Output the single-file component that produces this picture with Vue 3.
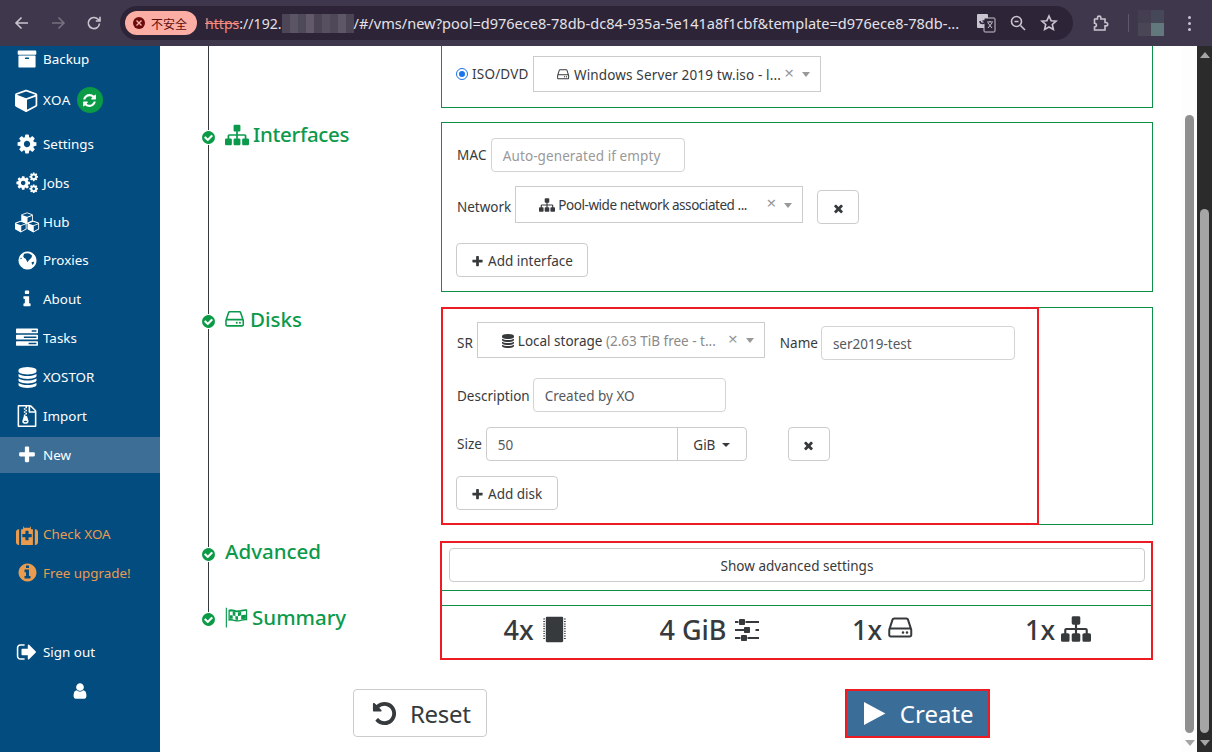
<script setup>
import { h } from 'vue'

const cog = 'M1152 896q0-106-75-181t-181-75-181 75-75 181 75 181 181 75 181-75 75-181zm512-109v222q0 12-8 23t-20 13l-185 28q-19 54-39 91 35 50 107 138 10 12 10 25t-9 23q-27 37-99 108t-94 71q-12 0-26-9l-138-108q-44 23-91 38-16 136-29 186-7 28-36 28h-222q-14 0-24.500-8.500t-11.500-21.500l-28-184q-49-16-90-37l-141 107q-10 9-25 9-14 0-25-11-126-114-165-168-7-10-7-23 0-12 8-23 15-21 51-66.500t54-70.500q-27-50-41-99l-183-27q-13-2-21-12.500t-8-23.500v-222q0-12 8-23t19-13l186-28q14-46 39-92-40-57-107-138-10-12-10-24 0-10 9-23 26-36 98.500-107.500t94.500-71.500q13 0 26 10l138 107q44-23 91-38 16-136 29-186 7-28 36-28h222q14 0 24.500 8.500t11.500 21.500l28 184q49 16 90 37l142-107q9-9 24-9 13 0 25 10 129 119 165 170 7 8 7 22 0 12-8 23-15 21-51 66.500t-54 70.500q26 50 41 98l183 28q13 2 21 12.500t8 23.500z'
const cube = 'M896 1629l640-349v-636l-640 233v752zm-64-864l698-254-698-254-698 254zm832-252v768q0 35-18 65t-49 47l-704 384q-28 16-61 16t-61-16l-704-384q-31-17-49-47t-18-65v-768q0-40 23-73t61-47l704-256q22-8 44-8t44 8l704 256q38 14 61 47t23 73z'
const disk = 'M896 128q209 0 385.500 103t279.500 279.500 103 385.500-103 385.500-279.500 279.500-385.500 103-385.500-103-279.500-279.500-103-385.500 103-385.500 279.500-279.500 385.500-103z'

const icons = {
  cog: [{ d: cog }],
  cogs: [
    { d: cog, transform: 'translate(20 300) scale(.66)' },
    { d: cog, transform: 'translate(1020 60) scale(.42)' },
    { d: cog, transform: 'translate(1020 950) scale(.42)' },
  ],
  cube: [{ d: cube }],
  cubes: [
    { d: cube, transform: 'translate(448 180) scale(.5)' },
    { d: cube, transform: 'translate(0 780) scale(.5)' },
    { d: cube, transform: 'translate(896 780) scale(.5)' },
  ],
  archive: [{ d: 'M1088 832q0-26-19-45t-45-19h-256q-26 0-45 19t-19 45 19 45 45 19h256q26 0 45-19t19-45zm576-192v960q0 26-19 45t-45 19h-1408q-26 0-45-19t-19-45v-960q0-26 19-45t45-19h1408q26 0 45 19t19 45zm64-448v256q0 26-19 45t-45 19h-1536q-26 0-45-19t-19-45v-256q0-26 19-45t45-19h1536q26 0 45 19t19 45z' }],
  globe: [
    { d: disk },
    { d: 'M620 330q180-70 420-30 150 60 250 190-40 200-190 300-120 100-190 250-110-130-170-290-140-60-210-200 30-130 90-220z', fill: '#034c7f' },
    { d: 'M1240 1050q110-60 230-40-30 160-130 270-90-80-100-230z', fill: '#034c7f' },
    { d: 'M330 640q60 40 90 110-60 40-130 40 10-80 40-150z', fill: '#034c7f' },
  ],
  info: [{ d: 'M1216 1344v128q0 26-19 45t-45 19h-512q-26 0-45-19t-19-45v-128q0-26 19-45t45-19h64v-384h-64q-26 0-45-19t-19-45v-128q0-26 19-45t45-19h384q26 0 45 19t19 45v576h64q26 0 45 19t19 45zm-128-1152v192q0 26-19 45t-45 19h-256q-26 0-45-19t-19-45v-192q0-26 19-45t45-19h256q26 0 45 19t19 45z' }],
  tasks: [{ d: 'M1024 1408h640v-128h-640v128zm-384-512h1024v-128h-1024v128zm640-512h384v-128h-384v128zm512 832v256q0 26-19 45t-45 19h-1664q-26 0-45-19t-19-45v-256q0-26 19-45t45-19h1664q26 0 45 19t19 45zm0-512v256q0 26-19 45t-45 19h-1664q-26 0-45-19t-19-45v-256q0-26 19-45t45-19h1664q26 0 45 19t19 45zm0-512v256q0 26-19 45t-45 19h-1664q-26 0-45-19t-19-45v-256q0-26 19-45t45-19h1664q26 0 45 19t19 45z' }],
  database: [{ d: 'M896 768q237 0 443-43t325-127v170q0 69-103 128t-280 93.500-385 34.500-385-34.500-280-93.500-103-128v-170q119 84 325 127t443 43zm0 768q237 0 443-43t325-127v170q0 69-103 128t-280 93.500-385 34.500-385-34.500-280-93.500-103-128v-170q119 84 325 127t443 43zm0-384q237 0 443-43t325-127v170q0 69-103 128t-280 93.500-385 34.500-385-34.500-280-93.500-103-128v-170q119 84 325 127t443 43zm0-1152q208 0 385 34.500t280 93.500 103 128v128q0 69-103 128t-280 93.500-385 34.500-385-34.500-280-93.500-103-128v-128q0-69 103-128t280-93.500 385-34.500z' }],
  zip: [{ d: 'M768 384v-128h-128v128h128zm128 128v-128h-128v128h128zm-128 128v-128h-128v128h128zm128 128v-128h-128v128h128zm700-388q28 28 48 76t20 88v1152q0 40-28 68t-68 28h-1344q-40 0-68-28t-28-68v-1600q0-40 28-68t68-28h896q40 0 88 20t76 48zm-444-244v376h376q-10-29-22-41l-313-313q-12-12-41-22zm384 1528v-1024h-416q-40 0-68-28t-28-68v-416h-128v128h-128v-128h-512v1536h1280zm-627-721l107 349q8 27 8 52 0 83-72.500 137.500t-183.500 54.500-183.500-54.500-72.500-137.500q0-25 8-52 21-63 120-396v-128h128v128h79q22 0 39 13t23 34zm-141 465q53 0 90.500-19t37.500-45-37.500-45-90.500-19-90.500 19-37.500 45 37.500 45 90.500 19z' }],
  plus: [{ d: 'M1600 736v192q0 40-28 68t-68 28h-416v416q0 40-28 68t-68 28h-192q-40 0-68-28t-28-68v-416h-416q-40 0-68-28t-28-68v-192q0-40 28-68t68-28h416v-416q0-40 28-68t68-28h192q40 0 68 28t28 68v416h416q40 0 68 28t28 68z' }],
  medkit: [{ d: 'M1280 1120v-192q0-14-9-23t-23-9h-224v-224q0-14-9-23t-23-9h-192q-14 0-23 9t-9 23v224h-224q-14 0-23 9t-9 23v192q0 14 9 23t23 9h224v224q0 14 9 23t23 9h192q14 0 23-9t9-23v-224h224q14 0 23-9t9-23zm-640-736h512v-128h-512v128zm-384 128v1280h-32q-92 0-158-66t-66-158v-832q0-92 66-158t158-66h32zm1120 0v1280h-960v-1280h160v-160q0-40 28-68t68-28h448q40 0 68 28t28 68v160h160zm416 224v832q0 92-66 158t-158 66h-32v-1280h32q92 0 158 66t66 158z' }],
  infoCircle: [{ d: 'M1152 1376v-160q0-14-9-23t-23-9h-96v-512q0-14-9-23t-23-9h-320q-14 0-23 9t-9 23v160q0 14 9 23t23 9h96v320h-96q-14 0-23 9t-9 23v160q0 14 9 23t23 9h448q14 0 23-9t9-23zm-128-896v-160q0-14-9-23t-23-9h-192q-14 0-23 9t-9 23v160q0 14 9 23t23 9h192q14 0 23-9t9-23zm640 416q0 209-103 385.500t-279.500 279.500-385.500 103-385.500-103-279.500-279.500-103-385.500 103-385.500 279.500-279.500 385.500-103 385.500 103 279.500 279.500 103 385.500z' }],
  signOut: [{ d: 'M704 1440q0 4 1 20t.5 26.500-3 23.500-10 19.500-20.500 6.500h-320q-119 0-203.500-84.500t-84.500-203.500v-704q0-119 84.500-203.500t203.500-84.500h320q13 0 22.500 9.500t9.500 22.500q0 4 1 20t.5 26.500-3 23.500-10 19.500-20.500 6.500h-320q-66 0-113 47t-47 113v704q0 66 47 113t113 47h312l11.500 1 11.500 3 8 5.500 7 9 2 13.500zm928-544q0 26-19 45l-544 544q-19 19-45 19t-45-19-19-45v-288h-448q-26 0-45-19t-19-45v-384q0-26 19-45t45-19h448v-288q0-26 19-45t45-19 45 19l544 544q19 19 19 45z' }],
  user: [{ d: 'M1536 1399q0 109-62.500 187t-150.500 78h-854q-88 0-150.500-78t-62.500-187q0-85 8.500-160.500t31.500-152 58.500-131 94-89 134.500-34.500q131 128 313 128t313-128q76 0 134.500 34.500t94 89 58.500 131 31.500 152 8.500 160.500zm-256-887q0 159-112.500 271.500t-271.500 112.500-271.500-112.500-112.500-271.500 112.500-271.500 271.500-112.500 271.500 112.500 112.500 271.500z' }],
  refresh: [{ d: 'M1639 1056q0 5-1 7-64 268-268 434.500t-478 166.500q-146 0-282.500-55t-243.500-157l-129 129q-19 19-45 19t-45-19-19-45v-448q0-26 19-45t45-19h448q26 0 45 19t19 45-19 45l-137 137q71 66 161 102t187 36q134 0 250-65t186-179q11-17 53-117 8-23 30-23h192q13 0 22.500 9.500t9.500 22.500zm25-800v448q0 26-19 45t-45 19h-448q-26 0-45-19t-19-45 19-45l138-138q-148-137-349-137-134 0-250 65t-186 179q-11 17-53 117-8 23-30 23h-199q-13 0-22.500-9.500t-9.500-22.500v-7q65-268 270-434.500t480-166.500q146 0 284 55.500t245 156.500l130-129q19-19 45-19t45 19 19 45z' }],
  sitemap: [{ d: 'M1792 1248v320q0 40-28 68t-68 28h-320q-40 0-68-28t-28-68v-320q0-40 28-68t68-28h96v-192h-512v192h96q40 0 68 28t28 68v320q0 40-28 68t-68 28h-320q-40 0-68-28t-28-68v-320q0-40 28-68t68-28h96v-192h-512v192h96q40 0 68 28t28 68v320q0 40-28 68t-68 28h-320q-40 0-68-28t-28-68v-320q0-40 28-68t68-28h96v-192q0-52 38-90t90-38h512v-192h-96q-40 0-68-28t-28-68v-320q0-40 28-68t68-28h320q40 0 68 28t28 68v320q0 40-28 68t-68 28h-96v192h512q52 0 90 38t38 90v192h96q40 0 68 28t28 68z' }],
  hdd: [{ d: 'M1040 1120q0 33-23.500 56.500t-56.500 23.500-56.500-23.500-23.500-56.500 23.500-56.500 56.500-23.500 56.500 23.500 23.500 56.500zm256 0q0 33-23.500 56.500t-56.500 23.500-56.500-23.500-23.500-56.500 23.500-56.500 56.500-23.500 56.500 23.500 23.500 56.500zm128 160v-320q0-13-9.500-22.500t-22.500-9.500h-1216q-13 0-22.500 9.500t-9.500 22.500v320q0 13 9.500 22.500t22.500 9.500h1216q13 0 22.500-9.500t9.500-22.500zm-1230-480h1180l-157-482q-4-13-16-21.500t-26-8.500h-782q-14 0-26 8.500t-16 21.500zm1358 160v320q0 66-47 113t-113 47h-1216q-66 0-113-47t-47-113v-320q0-25 16-75l197-606q17-53 63-86t101-33h782q55 0 101 33t63 86l197 606q16 50 16 75z' }],
  check: [{ d: 'M1412 734q0-28-18-46l-91-90q-19-19-45-19t-45 19l-408 407-226-226q-19-19-45-19t-45 19l-91 90q-18 18-18 46 0 27 18 45l362 362q19 19 45 19 27 0 46-19l543-543q18-18 18-45zm252 162q0 209-103 385.500t-279.500 279.500-385.500 103-385.500-103-279.500-279.500-103-385.500 103-385.500 279.500-279.500 385.500-103 385.500 103 279.500 279.500 103 385.500z' }],
  times: [{ d: 'M1490 1322q0 40-28 68l-136 136q-28 28-68 28t-68-28l-294-294-294 294q-28 28-68 28t-68-28l-136-136q-28-28-28-68t28-68l294-294-294-294q-28-28-28-68t28-68l136-136q28-28 68-28t68 28l294 294 294-294q28-28 68-28t68 28l136 136q28 28 28 68t-28 68l-294 294 294 294q28 28 28 68z' }],
  undo: [{ d: 'M1664 896q0 156-61 298t-164 245-245 164-298 61q-172 0-327-72.500t-264-204.500q-7-10-6.500-22.500t8.500-20.500l137-138q10-9 25-9 16 2 23 12 73 95 179 147t225 52q104 0 198.500-40.500t163.500-109.500 109.500-163.500 40.500-198.500-40.500-198.500-109.500-163.500-163.500-109.500-198.500-40.500q-98 0-188 35.500t-160 101.500l137 138q31 30 14 69-17 40-59 40h-448q-26 0-45-19t-19-45v-448q0-42 40-59 39-17 69 14l130 129q107-101 244.500-156.500t284.500-55.500q156 0 298 61t245 164 164 245 61 298z' }],
  play: [{ d: 'M200 130L1620 896L200 1662Z' }],
  sliders: [{ d: 'M480 1408v128h-352v-128h352zm352-128q26 0 45 19t19 45v256q0 26-19 45t-45 19h-256q-26 0-45-19t-19-45v-256q0-26 19-45t45-19h256zm160-384v128h-864v-128h864zm-640-512v128h-224v-128h224zm1312 1024v128h-736v-128h736zm-960-1152q26 0 45 19t19 45v256q0 26-19 45t-45 19h-256q-26 0-45-19t-19-45v-256q0-26 19-45t45-19h256zm320 512q26 0 45 19t19 45v256q0 26-19 45t-45 19h-256q-26 0-45-19t-19-45v-256q0-26 19-45t45-19h256zm640 128v128h-224v-128h224zm0-512v128h-864v-128h864z' }],
  flag: [
    { d: 'M60 130h90v1540H60z' },
    { d: 'M270 300C520 170 760 360 1010 340C1270 320 1470 200 1730 270V1120C1470 1060 1270 1190 1010 1210C760 1230 520 1050 270 1160ZM370 450V1020C560 960 780 1100 1010 1110C1230 1100 1420 980 1630 990V400C1420 370 1230 480 1010 490C780 490 560 370 370 450Z', rule: 'evenodd' },
    { d: 'M370 740C460 700 520 720 600 740V1000C520 990 440 1000 370 1020ZM600 470C680 470 740 480 810 490V770C740 770 660 750 600 740ZM810 770C880 780 940 790 1010 790V1110C940 1100 870 1080 810 1060ZM1010 490C1100 490 1180 470 1260 440V720C1180 760 1100 780 1010 790ZM1260 720C1380 680 1500 660 1630 680V990C1500 980 1380 1000 1260 1060Z' },
  ],
  chip: [
    { d: 'M430 110h932q70 0 70 70v1432q0 70-70 70H430q-70 0-70-70V180q0-70 70-70z' },
    { d: 'M200 220h110v60H200zM200 370h110v60H200zM200 520h110v60H200zM200 670h110v60H200zM200 820h110v60H200zM200 970h110v60H200zM200 1120h110v60H200zM200 1270h110v60H200zM200 1420h110v60H200zM1482 220h110v60h-110zM1482 370h110v60h-110zM1482 520h110v60h-110zM1482 670h110v60h-110zM1482 820h110v60h-110zM1482 970h110v60h-110zM1482 1120h110v60h-110zM1482 1270h110v60h-110zM1482 1420h110v60h-110z' },
  ],
}

const Icon = (props) =>
  h(
    'svg',
    { viewBox: '0 0 1792 1792', width: props.size, height: props.size, fill: 'currentColor', class: 'fa' },
    icons[props.name].map((p) =>
      h('path', { d: p.d, transform: p.transform, fill: p.fill, 'fill-rule': p.rule })
    )
  )
Icon.props = ['name', 'size']

const nav = [
  { label: 'Backup', icon: 'archive', size: 20 },
  { label: 'XOA', icon: 'cube', size: 24, badge: true },
  { label: 'Settings', icon: 'cog', size: 22 },
  { label: 'Jobs', icon: 'cogs', size: 24 },
  { label: 'Hub', icon: 'cubes', size: 25 },
  { label: 'Proxies', icon: 'globe', size: 21 },
  { label: 'About', icon: 'info', size: 20 },
  { label: 'Tasks', icon: 'tasks', size: 22 },
  { label: 'XOSTOR', icon: 'database', size: 21 },
  { label: 'Import', icon: 'zip', size: 22 },
  { label: 'New', icon: 'plus', size: 20, active: true },
]
const nav2 = [
  { label: 'Check XOA', icon: 'medkit', size: 22 },
  { label: 'Free upgrade!', icon: 'infoCircle', size: 21 },
]
const stats = [
  { text: '4x', icon: 'chip', size: 29 },
  { text: '4 GiB', icon: 'sliders', size: 28 },
  { text: '1x', icon: 'hdd', size: 28 },
  { text: '1x', icon: 'sitemap', size: 30 },
]
const blurCells = ['#4d4658', '#5b5465', '#4f4a5a', '#62596a', '#4a4455', '#575060', '#4f4858', '#5e5767', '#4b4556']
</script>

<template>
  <div class="app">
    <header class="chrome">
      <div class="nav-btns">
        <svg width="18" height="18" viewBox="0 0 18 18" class="cicon"><path d="M15 9H3.500M8.500 3.500L3 9l5.500 5.500" /></svg>
        <svg width="18" height="18" viewBox="0 0 18 18" class="cicon dim"><path d="M3 9h11.500M9.500 3.500L15 9l-5.500 5.500" /></svg>
        <svg width="18" height="18" viewBox="0 0 18 18" class="cicon"><path d="M14.500 9.500a5.600 5.600 0 1 1-1.500-4.300L15 7M15 2.800V7h-4.200" /></svg>
      </div>
      <div class="omnibox">
        <div class="pill">
          <span class="pill-dot"><svg width="8" height="8" viewBox="0 0 8 8" class="pill-x"><path d="M1.500 1.500l5 5M6.500 1.500l-5 5" /></svg></span>
          <span class="pill-text">不安全</span>
        </div>
        <div class="url"><span class="scheme">https</span><span>://192.</span><span class="blur"><i v-for="(c, i) in blurCells" :key="i" :style="{ background: c }"></i></span><span class="path">/#/vms/new?pool=d976ece8-78db-dc84-935a-5e141a8f1cbf&amp;template=d976ece8-78db-...</span></div>
        <div class="omni-icons">
          <svg width="20" height="20" viewBox="0 0 20 20" class="trans"><rect x="1" y="1" width="11" height="14" rx="1" class="t1" /><rect x="8" y="5" width="11" height="14" rx="1" class="t2" /><path d="M4 8a2.500 2.500 0 1 0 5 0H6.500" class="t3" /><path d="M11 9h6M14 8v1M12 15l4-5M12 10l4 5" class="t4" /></svg>
          <svg width="18" height="18" viewBox="0 0 18 18" class="cicon"><circle cx="7.500" cy="7.500" r="5" /><path d="M11.500 11.500L16 16M5.500 7.500h4" /></svg>
          <svg width="18" height="18" viewBox="0 0 18 18" class="cicon"><path d="M9 2l2.100 4.700 5 .5-3.800 3.300 1.100 5L9 13l-4.400 2.500 1.100-5L1.900 7.200l5-.5z" /></svg>
        </div>
      </div>
      <div class="tool-icons">
        <svg width="18" height="18" viewBox="0 0 18 18" class="cicon"><path d="M3 5h3.500V3.800a1.700 1.700 0 0 1 3.400 0V5H14v3.500h1a1.700 1.700 0 0 1 0 3.400h-1V16H3.500v-3a1.900 1.900 0 0 0 0-3.800V5z" /></svg>
        <span class="tool-sep"></span>
        <div class="avatar"><i class="a1"></i><i class="a2"></i><i class="a3"></i><i class="a4"></i></div>
        <div class="dots"><i></i><i></i><i></i></div>
      </div>
    </header>

    <div class="view">
      <aside class="sidebar">
        <ul class="menu first">
          <li v-for="n in nav" :key="n.label" class="item" :class="{ active: n.active, tall: n.badge }">
            <span class="item-ic"><Icon :name="n.icon" :size="n.size" /></span>
            <span :class="{ wide: n.badge }">{{ n.label }}</span>
            <span v-if="n.badge" class="badge"><Icon name="refresh" size="15" /></span>
          </li>
        </ul>
        <ul class="menu orange">
          <li v-for="n in nav2" :key="n.label" class="item">
            <span class="item-ic"><Icon :name="n.icon" :size="n.size" /></span>
            <span>{{ n.label }}</span>
          </li>
        </ul>
        <ul class="menu">
          <li class="item signout">
            <span class="item-ic"><Icon name="signOut" size="22" /></span>
            <span>Sign out</span>
          </li>
          <li class="item user"><Icon name="user" size="18" /></li>
        </ul>
      </aside>

      <main class="content">
        <section class="step step-first">
          <div class="step-title"></div>
          <div class="card card-clipped">
            <div class="row">
              <span class="radio"></span>
              <span class="lbl iso">ISO/DVD</span>
              <div class="select w288 sel-win">
                <Icon name="hdd" size="14" /><span class="sel-text">Windows Server 2019 tw.iso - l...</span>
                <span class="sel-x">×</span><span class="sel-caret"></span>
              </div>
            </div>
          </div>
        </section>

        <section class="step step-if">
          <span class="dot"><Icon name="check" size="15" /></span>
          <h4 class="step-title title-if"><Icon name="sitemap" size="24" /><span>Interfaces</span></h4>
          <div class="card card-pad">
            <div class="row">
              <span class="lbl mac">MAC</span>
              <div class="input w194 placeholder">Auto-generated if empty</div>
            </div>
            <div class="row row-top mt14">
              <span class="lbl drop">Network</span>
              <div class="select w288 h37 sel-net">
                <Icon name="sitemap" size="16" /><span class="sel-text">Pool-wide network associated ...</span>
                <span class="sel-x">×</span><span class="sel-caret"></span>
              </div>
              <button class="btn icon-btn ml14 drop4"><Icon name="times" size="13" /></button>
            </div>
            <div class="row mt19">
              <button class="btn"><Icon name="plus" size="13" /><span>Add interface</span></button>
            </div>
          </div>
        </section>

        <section class="step step-disks">
          <span class="dot dot-up"><Icon name="check" size="15" /></span>
          <h4 class="step-title title-disks"><Icon name="hdd" size="22" /><span>Disks</span></h4>
          <div class="card card-pad card-disks">
            <div class="row row-top">
              <span class="lbl drop">SR</span>
              <div class="select w288">
                <Icon name="database" size="14" /><span class="sel-text">Local storage <em>(2.63 TiB free - t...</em></span>
                <span class="sel-x">×</span><span class="sel-caret"></span>
              </div>
              <span class="lbl drop ml14 tight">Name</span>
              <div class="input w194 drop4">ser2019-test</div>
            </div>
            <div class="row mt18">
              <span class="lbl tight low1">Description</span>
              <div class="input w193">Created by XO</div>
            </div>
            <div class="row mt15">
              <span class="lbl size">Size</span>
              <div class="group">
                <div class="group-input">50</div>
                <div class="group-unit">GiB <span class="caret"></span></div>
              </div>
              <button class="btn icon-btn ml41"><Icon name="times" size="13" /></button>
            </div>
            <div class="row mt15">
              <button class="btn btn-disk"><Icon name="plus" size="13" /><span>Add disk</span></button>
            </div>
            <span class="redbox redbox-disks"></span>
          </div>
        </section>

        <section class="step">
          <span class="dot dot-adv"><Icon name="check" size="15" /></span>
          <h4 class="step-title title-adv"><span>Advanced</span></h4>
          <div class="card card-adv">
            <button class="btn btn-block">Show advanced settings</button>
          </div>
        </section>

        <section class="step step-last">
          <span class="dot dot-up"><Icon name="check" size="15" /></span>
          <h4 class="step-title"><Icon name="flag" size="23" /><span>Summary</span></h4>
          <div class="card card-summary">
            <div v-for="(s, i) in stats" :key="i" class="stat">
              <span>{{ s.text }}</span><Icon :name="s.icon" :size="s.size" />
            </div>
            <span class="redbox redbox-summary"></span>
          </div>
        </section>

        <div class="actions">
          <button class="big-btn reset"><Icon name="undo" size="27" /><span>Reset</span></button>
          <button class="big-btn primary"><Icon name="play" size="27" /><span>Create</span></button>
        </div>
      </main>

      <div class="scroll inner">
        <span class="spacer-inner"></span>
        <span class="thumb"></span>
        <span class="arrow-down"></span>
      </div>
      <div class="scroll outer">
        <span class="arrow-up"></span>
        <span class="spacer-outer"></span>
        <span class="thumb"></span>
        <span class="arrow-down"></span>
      </div>
    </div>
  </div>
</template>

<style>
html, body { margin: 0; padding: 0; background: #fff; overflow: hidden; }
</style>

<style scoped>
* { box-sizing: border-box; }
.app { width: 1212px; height: 752px; display: flex; flex-direction: column; overflow: hidden; font-family: "Noto Sans", "Open Sans", sans-serif; font-size: 13.5px; color: #373a3c; background: #fff; }
.fa { flex: none; display: block; }

.chrome { height: 46px; flex: none; background: #3f384c; display: flex; align-items: center; padding: 0 0 0 13px; }
.cicon { fill: none; stroke: #c8c4d0; stroke-width: 1.600; flex: none; }
.cicon.dim { stroke: #76707f; }
.nav-btns { display: flex; gap: 18px; width: 107px; flex: none; }
.omnibox { width: 953px; height: 34px; border-radius: 17px; background: #2d2537; display: flex; align-items: center; padding-left: 5px; flex: none; }
.pill { width: 72px; height: 24px; border-radius: 12px; background: #fdaea4; display: flex; align-items: center; padding-left: 8px; flex: none; color: #5e0c0a; }
.pill-dot { width: 12px; height: 12px; border-radius: 50%; background: #6b0b0b; display: flex; align-items: center; justify-content: center; }
.pill-x { fill: none; stroke: #f3b3ab; stroke-width: 1.400; }
.pill-text { margin-left: 6px; font: 12px "Noto Sans CJK SC", sans-serif; }
.url { margin-left: 8px; font-size: 14.100px; color: #e4e1e8; white-space: nowrap; display: flex; align-items: center; flex: none; width: 764px; }
.path { font-size: 14.550px; }
.scheme { color: #f58b80; text-decoration: line-through; }
.blur { display: grid; grid-template-columns: repeat(9, 8px); height: 19px; }
.omni-icons { display: flex; align-items: center; gap: 13px; margin-left: 7px; }
.t1 { fill: #c8c4d0; }
.t2 { fill: #2d2537; stroke: #c8c4d0; stroke-width: 1; }
.t3 { fill: none; stroke: #2d2537; stroke-width: 1.500; }
.t4 { fill: none; stroke: #c8c4d0; stroke-width: 1; }
.tool-icons { display: flex; align-items: center; margin-left: 18px; }
.tool-sep { width: 1px; height: 18px; background: #5e5869; margin-left: 19px; }
.avatar { width: 26px; height: 26px; margin-left: 9px; display: grid; grid-template-columns: 13px 13px; grid-template-rows: 13px 13px; }
.a1 { background: #443f50; } .a2 { background: #46485a; } .a3 { background: #4a4656; } .a4 { background: #62787c; }
.dots { display: flex; flex-direction: column; gap: 3px; margin-left: 24px; }
.dots i { width: 3px; height: 3px; border-radius: 50%; background: #c8c4d0; }

.view { flex: 1; display: flex; min-height: 0; }
.sidebar { width: 160px; flex: none; background: #034c7f; color: #fff; overflow: hidden; font-size: 13.400px; }
.menu { list-style: none; margin: 0 0 43px; padding: 0; }
.menu.first { margin-top: -5px; }
.menu.orange { color: #eb9b4e; }
.item { height: 36px; margin-bottom: 2.875px; display: flex; align-items: center; padding-left: 15px; }
.item.tall { height: 43px; padding-bottom: 2px; }
.item.active { background: #3c6e96; }
.item.signout { margin-bottom: 3.500px; }
.item.user { justify-content: center; padding: 0; }
.item-ic { width: 24px; display: flex; justify-content: center; margin-right: 4px; flex: none; }
.wide { letter-spacing: .5px; }
.badge { width: 26px; height: 26px; border-radius: 50%; background: #0b9a46; margin-left: 6px; display: flex; align-items: center; justify-content: center; }

.content { flex: 1; min-width: 0; overflow: hidden; padding-right: 29px; }
.step { display: flex; position: relative; padding: 0 0 14px 65px; }
.step-if { padding-bottom: 15px; }
.step-disks { padding-bottom: 16px; }
.step::before { content: ""; position: absolute; left: 48px; top: 0; bottom: 0; width: 1px; background: #373a3c; }
.step-last::before { bottom: auto; height: 14px; }
.dot { position: absolute; left: 41px; top: 8px; width: 15px; height: 15px; color: #0b9a46; background: #fff; border-radius: 50%; }
.dot-up { top: 7px; }
.dot-adv { top: 6px; }
.step-title { width: 216px; flex: none; margin: 0; color: #0b9a4c; font-size: 20.500px; font-weight: 500; line-height: 25px; display: flex; align-items: center; gap: 4px; height: 25px; }
.title-if span { letter-spacing: -.3px; }
.title-disks { gap: 3px; }
.title-adv { margin-top: -2px; }
.card { flex: 1; min-width: 0; border: 1px solid #0f8f48; position: relative; }
.card-clipped { border-top: 0; padding: 10px 0 15px 14px; }
.card-pad { padding: 15px 14px 14px; }
.card-disks { padding-top: 14px; }
.card-adv { padding: 6px 7px 8px; }
.card-summary { padding: 0 7px 7px; display: grid; grid-template-columns: repeat(4, 1fr); height: 55px; }
.step-last { padding-bottom: 29px; }
.row { display: flex; align-items: center; }
.row-top { align-items: flex-start; }
.mt14 { margin-top: 14px; } .mt15 { margin-top: 15px; } .mt18 { margin-top: 18px; } .mt19 { margin-top: 19px; }
.ml14 { margin-left: 14px; } .ml41 { margin-left: 41px; }
.lbl { margin-right: 4px; padding-left: 1px; white-space: nowrap; }
.drop { margin-top: 12px; }
.drop4 { margin-top: 4px; }
.mac { letter-spacing: .2px; }
.tight { margin-right: 3px; }
.low1 { padding-top: 2px; }
.size { margin-right: 4px; }
.iso { width: 61px; padding: 0; margin: 0; letter-spacing: .2px; }
.radio { width: 12px; height: 12px; border-radius: 50%; border: 3px solid #fff; outline: 1px solid #1a73e8; outline-offset: -1px; background: #1a73e8; margin: 0 4px 0 0; flex: none; }
.select { height: 36px; border: 1px solid #ccc; display: flex; align-items: center; padding: 1px 10px 0 23px; color: #373a3c; gap: 3px; flex: none; white-space: nowrap; }
.h37 { height: 37px; }
.w288 { width: 288px; }
.sel-text { flex: 1; min-width: 0; overflow: hidden; }
.sel-win .sel-text { letter-spacing: .15px; }
.sel-net .sel-text { letter-spacing: -.45px; }
.sel-text em { font-style: normal; color: #8a8a8a; }
.sel-x { color: #999; font-size: 17px; line-height: 1; margin-top: -5px; margin-right: 4px; }
.sel-caret { width: 0; height: 0; border: 4px solid transparent; border-top: 5px solid #999; border-bottom: 0; margin-left: 1px; }
.input { height: 34px; border: 1px solid #d4d4d4; border-radius: 4px; display: flex; align-items: center; padding: 2px 11px 0; color: #55595c; flex: none; white-space: nowrap; }
.placeholder { color: #999; letter-spacing: .1px; }
.w194 { width: 194px; } .w193 { width: 193px; }
.group { display: flex; height: 34px; width: 261px; border: 1px solid #ccc; border-radius: 4px; flex: none; }
.group-input { flex: 1; display: flex; align-items: center; padding: 2px 0 0 11px; color: #55595c; }
.group-unit { width: 69px; border-left: 1px solid #ccc; display: flex; align-items: center; justify-content: center; gap: 7px; padding-top: 2px; }
.caret { width: 0; height: 0; border: 4px solid transparent; border-top: 4px solid #373a3c; border-bottom: 0; }
.btn { height: 34px; border: 1px solid #ccc; border-radius: 4px; background: #fff; color: #373a3c; font: inherit; display: inline-flex; align-items: center; justify-content: center; gap: 4px; padding: 2px 14px 0; }
.btn-disk { padding-right: 15px; }
.icon-btn { width: 42px; padding: 2px 0 0; }
.btn-block { width: 100%; }
.stat { display: flex; align-items: center; justify-content: center; gap: 6px; font-size: 27px; font-weight: 500; }
.redbox { position: absolute; border: 2px solid #ed1c24; pointer-events: none; }
.redbox-disks { left: -1px; top: -1px; bottom: -1px; width: 598px; }
.redbox-summary { left: -2px; right: -1px; top: -65px; bottom: -1px; }
.actions { display: grid; grid-template-columns: 1fr 1fr; margin: 0 -13px 0 11px; justify-items: center; align-items: start; }
.big-btn { height: 48px; display: inline-flex; align-items: center; gap: 12px; border: 1px solid #ccc; border-radius: 4px; background: #fff; color: #373a3c; font: inherit; font-size: 24px; padding: 0 15px 0 17px; }
.big-btn.reset span { letter-spacing: -.3px; }
.big-btn.primary { height: 49px; background: #3b6d99; color: #fff; border: 2px solid #ed1c24; border-radius: 0; padding: 0 14px; }

.scroll { width: 15px; flex: none; display: flex; flex-direction: column; align-items: center; }
.inner { background: #fdfdfd; }
.outer { background: #2b2b2b; }
.thumb { width: 9px; flex: 1; background: #8f8f8f; border-radius: 5px; }
.outer .thumb { background: #a5a5a5; }
.spacer-inner { height: 69px; flex: none; }
.spacer-outer { height: 151px; flex: none; }
.arrow-up { width: 0; height: 0; border: 5px solid transparent; border-bottom: 6px solid #a5a5a5; border-top: 0; margin-top: 6px; }
.arrow-down { width: 0; height: 0; border: 5px solid transparent; border-top: 6px solid #a5a5a5; border-bottom: 0; margin: 7px 0 6px; }
</style>
